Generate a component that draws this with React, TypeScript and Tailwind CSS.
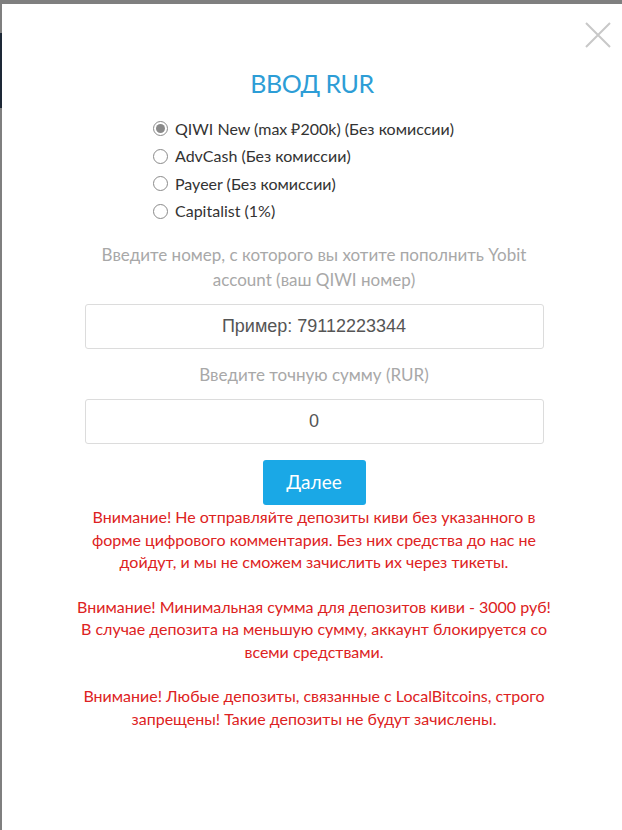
import React from "react";

export default function App() {
  const font = { fontFamily: "Lato, 'Open Sans', sans-serif" };
  return (
    <div className="w-[622px] h-[830px] bg-[#7f7f7f] pt-[4px] pl-[2px] overflow-hidden relative">
      <div className="absolute left-0 top-[33px] w-[2px] h-[75px] bg-[#1d2836]" />
      <div className="relative bg-white w-[620px] h-[826px]" style={font}>
        <button className="absolute right-[10px] top-[17px] w-[28px] h-[28px]">
          <svg viewBox="0 0 28 28" width="28" height="28">
            <path d="M2 2 L26 26 M26 2 L2 26" stroke="#c8c8c8" strokeWidth="2" fill="none" />
          </svg>
        </button>
        <div className="flex flex-col items-center pt-[63px]">
          <h1 className="text-[25px] leading-[32px] text-[#2d9dd6] tracking-[-0.5px]">ВВОД RUR</h1>
          <div className="flex flex-col mt-[16px] self-start ml-[151px] text-[16px] text-[#333]">
            {[
              ["QIWI New (max ₽200k) (Без комиссии)", true],
              ["AdvCash (Без комиссии)", false],
              ["Payeer (Без комиссии)", false],
              ["Capitalist (1%)", false],
            ].map(([label, checked], i) => (
              <label key={i} className="flex items-center h-[27.5px] gap-[7px]">
                <span className="w-[15px] h-[15px] rounded-full border border-[#8a8a8a] flex items-center justify-center bg-white">
                  {checked ? <span className="w-[9px] h-[9px] rounded-full bg-[#8a8a8a]" /> : null}
                </span>
                <span>{label as string}</span>
              </label>
            ))}
          </div>
          <p className="mt-[17px] w-[470px] text-center text-[17px] leading-[25px] text-[#a8a8a8] ml-[4px]">
            Введите номер, с которого вы хотите пополнить Yobit account (ваш QIWI номер)
          </p>
          <div
            className="mt-[12px] ml-[4px] w-[459px] h-[45px] border border-[#dcdcdc] rounded-[3px] flex items-center justify-center text-[18px] text-[#555]"
            style={{ fontFamily: "'Liberation Sans', Arial, sans-serif" }}
          >
            Пример: 79112223344
          </div>
          <p className="mt-[13px] ml-[4px] text-center text-[17px] leading-[25px] text-[#a8a8a8]">
            Введите точную сумму (RUR)
          </p>
          <div
            className="mt-[12px] ml-[4px] w-[459px] h-[45px] border border-[#dcdcdc] rounded-[3px] flex items-center justify-center text-[18px] text-[#555]"
            style={{ fontFamily: "'Liberation Sans', Arial, sans-serif" }}
          >
            0
          </div>
          <button className="mt-[16px] ml-[4px] w-[103px] h-[45px] rounded-[3px] bg-[#1aa8e6] text-white text-[19px]">
            Далее
          </button>
          <div className="mt-[1px] ml-[4px] w-[500px] text-center text-[16px] leading-[22.5px] text-[#dd2222]">
            <p className="px-[22px]">
              Внимание! Не отправляйте депозиты киви без указанного в форме цифрового комментария. Без них средства до нас не дойдут, и мы не сможем зачислить их через тикеты.
            </p>
            <p className="mt-[22px] px-[10px]">
              Внимание! Минимальная сумма для депозитов киви - 3000 руб! В случае депозита на меньшую сумму, аккаунт блокируется со всеми средствами.
            </p>
            <p className="mt-[22px] px-[12px]">
              Внимание! Любые депозиты, связанные с LocalBitcoins, строго запрещены! Такие депозиты не будут зачислены.
            </p>
          </div>
        </div>
      </div>
    </div>
  );
}
